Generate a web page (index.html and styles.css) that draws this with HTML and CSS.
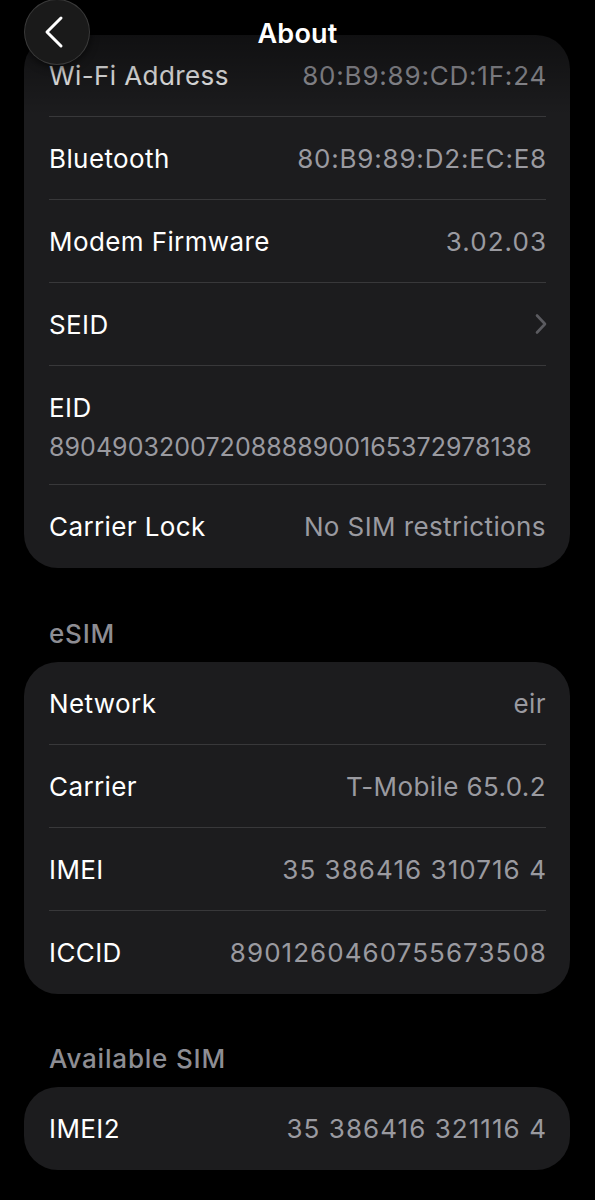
FILE: index.html
```html
<!DOCTYPE html>
<html lang="en">
<head>
<meta charset="utf-8">
<title>About</title>
<link rel="stylesheet" href="styles.css">
</head>
<body>
<div class="screen">
  <main class="content">
    <section class="card">
      <div class="row"><span class="label">Wi-Fi Address</span><span class="value num mac">80:B9:89:CD:1F:24</span></div>
      <div class="row"><span class="label">Bluetooth</span><span class="value num mac">80:B9:89:D2:EC:E8</span></div>
      <div class="row"><span class="label">Modem Firmware</span><span class="value num">3.02.03</span></div>
      <div class="row"><span class="label">SEID</span>
        <svg class="chev" width="14" height="22" viewBox="0 0 14 22"><path d="M3 2.5 L11 11 L3 19.5" fill="none" stroke="#5b5b60" stroke-width="2.6" stroke-linecap="round" stroke-linejoin="round"/></svg>
      </div>
      <div class="row row-tall"><span class="label">EID</span><span class="value">89049032007208888900165372978138</span></div>
      <div class="row"><span class="label">Carrier Lock</span><span class="value">No SIM restrictions</span></div>
    </section>

    <h2 class="section-title first">eSIM</h2>
    <section class="card">
      <div class="row"><span class="label">Network</span><span class="value">eir</span></div>
      <div class="row"><span class="label">Carrier</span><span class="value">T-Mobile 65.0.2</span></div>
      <div class="row"><span class="label">IMEI</span><span class="value num">35 386416 310716 4</span></div>
      <div class="row"><span class="label">ICCID</span><span class="value num">8901260460755673508</span></div>
    </section>

    <h2 class="section-title">Available SIM</h2>
    <section class="card">
      <div class="row"><span class="label">IMEI2</span><span class="value num">35 386416 321116 4</span></div>
    </section>
  </main>

  <header class="navbar">
    <button class="back" aria-label="Back">
      <svg width="24" height="34" viewBox="0 0 24 34"><path d="M18 3 L4 17 L18 31" fill="none" stroke="#ffffff" stroke-width="3" stroke-linecap="round" stroke-linejoin="round"/></svg>
    </button>
    <h1 class="title">About</h1>
  </header>
</div>
</body>
</html>
```
FILE: styles.css
```css
* { box-sizing: border-box; }
html, body {
  margin: 0;
  padding: 0;
  background: #000;
}
body {
  font-family: Inter, "Noto Sans", "Liberation Sans", sans-serif;
  color: #fff;
}
.screen {
  position: relative;
  width: 595px;
  height: 1200px;
  overflow: hidden;
  background: #000;
}
.content {
  padding: 35px 25px 0 24px;
}
.card {
  background: #1c1c1e;
  border-radius: 34px;
}
.content .card:first-child .row:first-child { height: 82px; }
.row {
  margin: 0 24px 0 25px;
  height: 83px;
  display: flex;
  align-items: center;
  justify-content: space-between;
  border-bottom: 1px solid #38383a;
  font-size: 26px;
  letter-spacing: 0.4px;
  white-space: nowrap;
}
.row:last-child { border-bottom: none; }
.row-tall {
  height: 119px;
  flex-direction: column;
  align-items: flex-start;
  justify-content: center;
  gap: 7px;
  padding-top: 5px;
}
.row-tall .value { font-size: 25px; letter-spacing: 0.05px; line-height: 32px; }
.row-tall .label { line-height: 32px; }
.label { color: #ffffff; }
.value { color: #9a9aa0; }
.num { letter-spacing: 1.05px; margin-right: -1px; }
.mac { letter-spacing: 0.8px; }
.chev { display: block; margin-right: -2px; }
.section-title {
  margin: 50px 0 13px 25px;
  font-size: 26px;
  line-height: 30px;
  font-weight: 500;
  color: #8d8d93;
  letter-spacing: 0.8px;
}
.section-title.first { margin-top: 51px; }
.navbar {
  position: absolute;
  top: 0;
  left: 0;
  right: 0;
  height: 120px;
  background: linear-gradient(to bottom, rgba(0,0,0,0.6) 0px, rgba(0,0,0,0.4) 40px, rgba(0,0,0,0.22) 75px, rgba(0,0,0,0) 115px);
  pointer-events: none;
}
.back {
  position: absolute;
  left: 24px;
  top: -1px;
  width: 66px;
  height: 66px;
  border-radius: 50%;
  background: #1a1a1a;
  border: 1px solid rgba(255,255,255,0.14);
  box-shadow: 0 2px 8px rgba(0,0,0,0.6);
  display: flex;
  align-items: center;
  justify-content: center;
  padding: 0 4px 0 0;
}
.back svg { display: block; }
.title {
  margin: 0;
  padding-top: 18px;
  text-align: center;
  font-size: 27px;
  line-height: 32px;
  font-weight: 600;
  letter-spacing: 0.2px;
  color: #fff;
}
```
